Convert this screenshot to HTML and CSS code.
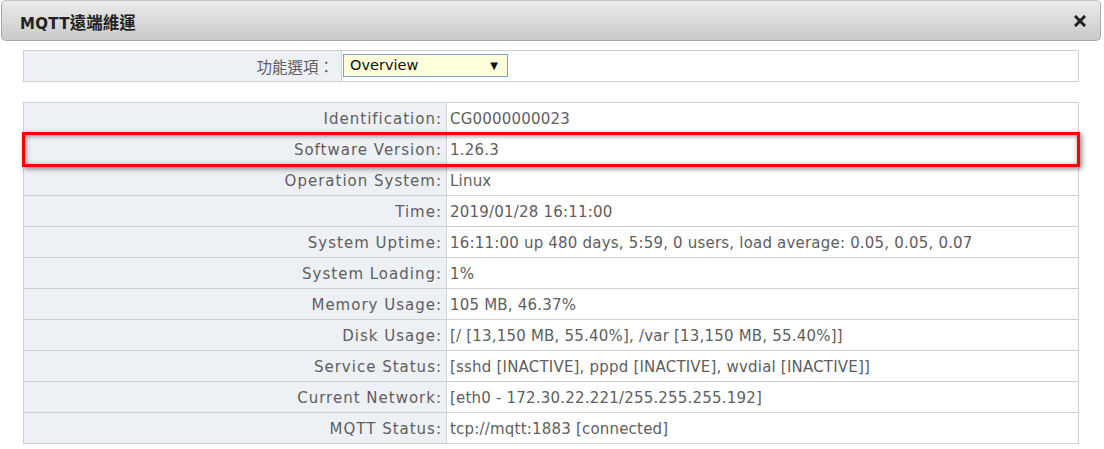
FILE: index.html
```html
<!DOCTYPE html>
<html>
<head>
<meta charset="utf-8">
<link rel="stylesheet" href="styles.css">
</head>
<body>
<div class="dialog">
  <div class="titlebar">
    <span class="title">MQTT<span class="cjk">遠端維運</span></span>
    <svg class="close" width="12" height="12" viewBox="0 0 12 12"><path d="M2 2 L10 10 M10 2 L2 10" stroke="#222" stroke-width="3" stroke-linecap="square"/></svg>
  </div>
  <div class="content">
    <table class="opt">
      <tr>
        <td class="lbl">功能選項：</td>
        <td class="val"><div class="select"><span>Overview</span><span class="arrow">▼</span></div></td>
      </tr>
    </table>
    <div class="infowrap">
      <table class="info">
        <tr><td class="lbl">Identification:</td><td class="val">CG0000000023</td></tr>
        <tr><td class="lbl">Software Version:</td><td class="val">1.26.3</td></tr>
        <tr><td class="lbl">Operation System:</td><td class="val">Linux</td></tr>
        <tr><td class="lbl">Time:</td><td class="val">2019/01/28 16:11:00</td></tr>
        <tr><td class="lbl">System Uptime:</td><td class="val">16:11:00 up 480 days, 5:59, 0 users, load average: 0.05, 0.05, 0.07</td></tr>
        <tr><td class="lbl">System Loading:</td><td class="val">1%</td></tr>
        <tr><td class="lbl">Memory Usage:</td><td class="val">105 MB, 46.37%</td></tr>
        <tr><td class="lbl">Disk Usage:</td><td class="val">[/ [13,150 MB, 55.40%], /var [13,150 MB, 55.40%]]</td></tr>
        <tr><td class="lbl">Service Status:</td><td class="val">[sshd [INACTIVE], pppd [INACTIVE], wvdial [INACTIVE]]</td></tr>
        <tr><td class="lbl">Current Network:</td><td class="val">[eth0 - 172.30.22.221/255.255.255.192]</td></tr>
        <tr><td class="lbl">MQTT Status:</td><td class="val">tcp://mqtt:1883 [connected]</td></tr>
      </table>
      <div class="highlight"></div>
    </div>
  </div>
</div>
</body>
</html>
```

FILE: styles.css
```css
html, body {
  margin: 0;
  padding: 0;
  background: #fff;
}
body {
  font-family: "DejaVu Sans", Verdana, sans-serif;
  font-size: 13px;
  color: #5e5e5e;
}
.dialog {
  width: 1104px;
}
.titlebar {
  margin-left: 1px;
  width: 1098px;
  height: 39px;
  border: 1px solid #a9a9a9;
  border-top-color: #c4c4c4;
  border-radius: 5px;
  background: linear-gradient(#ebebeb, #c9c9c9);
  display: flex;
  align-items: center;
  justify-content: space-between;
}
.title {
  margin-left: 18px;
  font-family: "DejaVu Sans", Verdana, sans-serif;
  font-weight: bold;
  font-size: 15px;
  color: #222;
  padding-top: 2px;
  letter-spacing: 0.3px;
}
.title .cjk {
  font-family: "Noto Sans CJK TC", sans-serif;
  font-size: 16.5px;
  letter-spacing: 0;
}
.close {
  margin-right: 14px;
  margin-top: 1px;
}
.content {
  margin-left: 23px;
  width: 1056px;
  padding-top: 9px;
}
table {
  border-collapse: collapse;
  width: 1056px;
  table-layout: fixed;
}
td {
  border: 1px solid #d0d0d0;
  padding: 0 4px 0 3px;
  box-sizing: border-box;
  white-space: nowrap;
}
td.lbl {
  background: #edf0f5;
  text-align: right;
}
td.val {
  background: #fff;
  text-align: left;
}
.opt td {
  height: 31px;
}
.opt td.lbl {
  width: 318px;
  font-family: "Noto Sans CJK TC", sans-serif;
  font-size: 15.5px;
  padding-right: 7px;
}
.opt td.val {
  padding-left: 1px;
}
.select {
  width: 165px;
  height: 23px;
  box-sizing: border-box;
  border: 1px solid #7b9fd6;
  background: #ffffdc;
  display: flex;
  align-items: center;
  justify-content: space-between;
  padding: 0 9px 1px 6px;
  color: #111;
  font-size: 14.5px;
  margin-top: -1px;
}
.arrow {
  font-size: 10px;
}
.infowrap {
  position: relative;
  margin-top: 20px;
}
.info td {
  height: 31px;
  font-size: 15px;
  padding-top: 2px;
}
.info td.lbl {
  width: 423px;
  letter-spacing: 1px;
  padding-right: 4px;
}
.info td.val {
  letter-spacing: 0.2px;
}
.highlight {
  position: absolute;
  left: -1px;
  top: 30px;
  width: 1058px;
  height: 35px;
  box-sizing: border-box;
  border: 3px solid #ff0000;
  box-shadow: inset 1px 1px 5px rgba(0,0,0,0.45), 2px 2px 5px rgba(0,0,0,0.45);
}
```
